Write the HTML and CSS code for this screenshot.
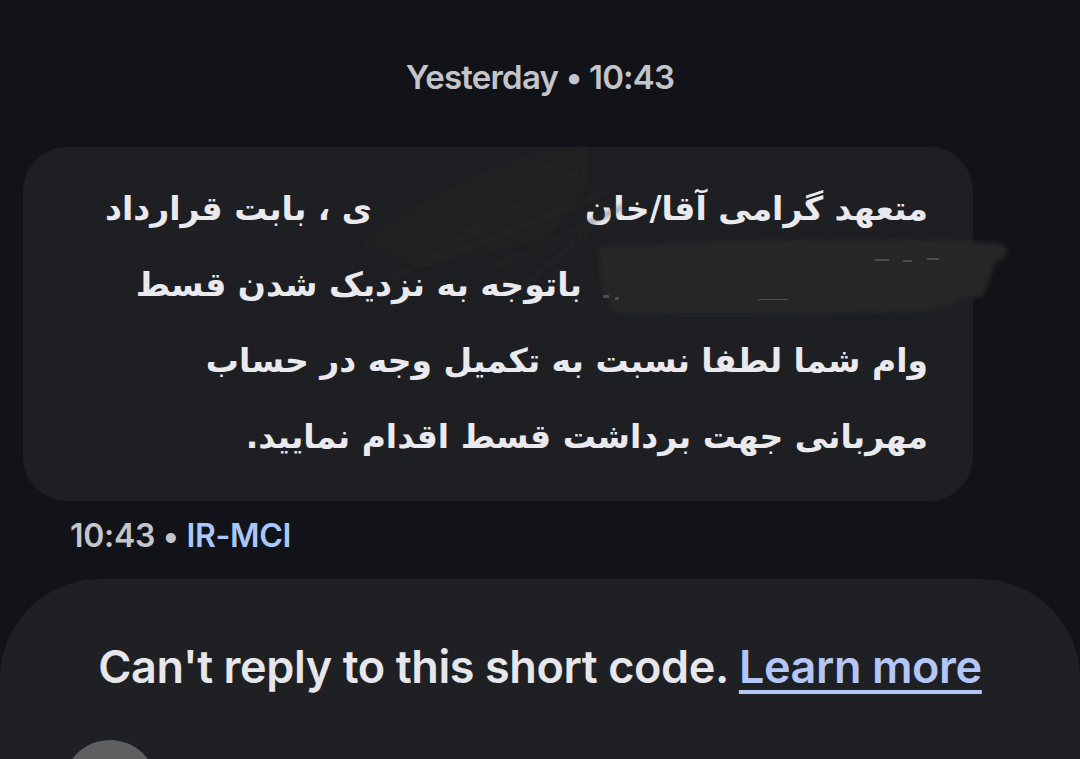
FILE: index.html
```html
<!DOCTYPE html>
<html lang="en">
<head>
<meta charset="utf-8">
<link rel="stylesheet" href="styles.css">
</head>
<body>
<div class="screen">
  <div class="date">Yesterday • 10:43</div>
  <div class="thread">
    <div class="bubble" dir="rtl">
      <p class="msg">متعهد گرامی آقا/خان<span class="gap g1"></span>ی ، بابت قرارداد<br><span class="gap g2"></span>باتوجه به نزدیک شدن قسط<br>وام شما لطفا نسبت به تکمیل وجه در حساب<br>مهربانی جهت برداشت قسط اقدام نمایید.</p>
      <svg class="smudge" width="1000" height="200" viewBox="0 0 1000 200" aria-hidden="true">
        <defs>
          <filter id="soft" x="-10%" y="-30%" width="120%" height="160%"><feGaussianBlur stdDeviation="2.5"/></filter>
        </defs>
        <g filter="url(#soft)" fill="#222224" opacity="0.7">
          <path d="M340 95 C 390 60, 450 25, 520 5 L 565 0 C 570 40, 550 70, 515 95 L 390 120 Z"/>
        </g>
        <g stroke="#29292b" stroke-width="2" fill="none" opacity="0.8" filter="url(#soft)">
          <path d="M430 95 L 540 10"/>
          <path d="M400 115 L 555 25"/>
          <path d="M370 130 L 585 45"/>
          <path d="M470 120 L 600 60"/>
          <path d="M500 140 L 570 80"/>
        </g>
        <g filter="url(#soft)" fill="#252527">
          <path d="M575 100 C 720 92, 880 90, 975 96 C 990 100, 985 110, 970 118 C 880 128, 720 140, 580 148 Z"/>
          <path d="M580 140 C 720 132, 880 128, 945 136 C 950 150, 930 160, 900 164 C 780 168, 660 168, 590 166 Z"/>
          <path d="M590 118 L 975 108 L 960 150 L 595 158 Z"/>
        </g>
        <g fill="#6a6a6c" opacity="0.6">
          <rect x="852" y="112" width="14" height="2"/>
          <rect x="880" y="113" width="9" height="2"/>
          <rect x="904" y="111" width="12" height="2"/>
          <rect x="735" y="152" width="30" height="1"/>
          <rect x="580" y="148" width="6" height="3"/>
          <rect x="592" y="150" width="4" height="3"/>
        </g>
      </svg>
    </div>
    <div class="meta"><span class="time">10:43</span> • <span class="sender">IR-MCI</span></div>
  </div>
  <div class="panel">
    <p class="notice">Can't reply to this short code. <a class="learn" href="#">Learn more</a></p>
    <div class="avatar"></div>
  </div>
</div>
</body>
</html>
```

FILE: styles.css
```css
* { box-sizing: border-box; }
html, body {
  margin: 0;
  padding: 0;
  background: #111318;
}
.screen {
  width: 1080px;
  height: 759px;
  overflow: hidden;
  display: flex;
  flex-direction: column;
  font-family: Inter, Roboto, sans-serif;
  color: #c6c6cc;
}
.date {
  text-align: center;
  font-size: 33px;
  font-weight: 600;
  color: #c4c5cb;
  padding-top: 56px;
  line-height: 42px;
  letter-spacing: -0.8px;
}
.thread {
  padding: 49px 0 0 23px;
}
.bubble {
  position: relative;
  width: 950px;
  height: 354px;
  background: #1e1f22;
  border-radius: 44px;
  padding: 24px 45px 0 0;
}
.msg {
  margin: 0;
  font-family: "DejaVu Sans", sans-serif;
  font-weight: bold;
  font-size: 33px;
  line-height: 76px;
  color: #e9e9ee;
  text-align: right;
}
.gap {
  display: inline-block;
  height: 1px;
}
.g1 { width: 213px; }
.g2 { width: 346px; }
.smudge {
  position: absolute;
  left: 0;
  top: 0;
  overflow: visible;
  pointer-events: none;
}
.meta {
  padding: 15px 0 0 47px;
  font-size: 32px;
  font-weight: 600;
  color: #c4c5cb;
  line-height: 40px;
  letter-spacing: -0.3px;
}
.sender { color: #a8c7fa; }
.panel {
  position: relative;
  margin-top: 23px;
  flex: 1;
  background: #1f2024;
  border-radius: 100px 100px 0 0;
}
.notice {
  margin: 0;
  padding-top: 60px;
  text-align: center;
  font-size: 45px;
  font-weight: 600;
  color: #e6e6eb;
  letter-spacing: -0.4px;
  line-height: 56px;
}
.learn {
  color: #b3c6f6;
  text-decoration: underline;
  text-decoration-thickness: 4px;
  text-underline-offset: 7px;
}
.avatar {
  position: absolute;
  left: 63px;
  top: 161px;
  width: 94px;
  height: 94px;
  border-radius: 50%;
  background: #5f5f61;
}
```
